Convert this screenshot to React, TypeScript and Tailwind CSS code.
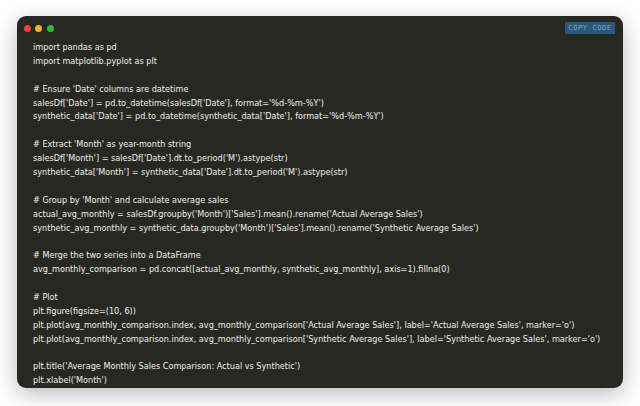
import React from "react";

const lines = [
  "import pandas as pd",
  "import matplotlib.pyplot as plt",
  "",
  "# Ensure 'Date' columns are datetime",
  "salesDf['Date'] = pd.to_datetime(salesDf['Date'], format='%d-%m-%Y')",
  "synthetic_data['Date'] = pd.to_datetime(synthetic_data['Date'], format='%d-%m-%Y')",
  "",
  "# Extract 'Month' as year-month string",
  "salesDf['Month'] = salesDf['Date'].dt.to_period('M').astype(str)",
  "synthetic_data['Month'] = synthetic_data['Date'].dt.to_period('M').astype(str)",
  "",
  "# Group by 'Month' and calculate average sales",
  "actual_avg_monthly = salesDf.groupby('Month')['Sales'].mean().rename('Actual Average Sales')",
  "synthetic_avg_monthly = synthetic_data.groupby('Month')['Sales'].mean().rename('Synthetic Average Sales')",
  "",
  "# Merge the two series into a DataFrame",
  "avg_monthly_comparison = pd.concat([actual_avg_monthly, synthetic_avg_monthly], axis=1).fillna(0)",
  "",
  "# Plot",
  "plt.figure(figsize=(10, 6))",
  "plt.plot(avg_monthly_comparison.index, avg_monthly_comparison['Actual Average Sales'], label='Actual Average Sales', marker='o')",
  "plt.plot(avg_monthly_comparison.index, avg_monthly_comparison['Synthetic Average Sales'], label='Synthetic Average Sales', marker='o')",
  "",
  "plt.title('Average Monthly Sales Comparison: Actual vs Synthetic')",
  "plt.xlabel('Month')",
];

export default function App() {
  return (
    <div className="w-[640px] h-[406px] bg-white overflow-hidden pt-[16px] pl-[17px]">
      <div className="relative w-[606px] h-[372px] rounded-[9px] bg-[#272822] overflow-hidden shadow-[0_6px_22px_rgba(0,0,0,0.28)]">
        <div className="h-[25px] flex items-center gap-[4.7px] pl-[6.5px]">
          <span className="w-[7px] h-[7px] rounded-full bg-[#fe3b3b]" />
          <span className="w-[7px] h-[7px] rounded-full bg-[#f8b120]" />
          <span className="w-[7px] h-[7px] rounded-full bg-[#28c328]" />
        </div>
        <button className="absolute top-[6px] right-[8px] w-[50px] h-[12px] bg-[#2a577d] text-[#7ea4c2] text-[7px] leading-[12px] tracking-[0.6px] flex items-center justify-center" style={{ fontFamily: '"DejaVu Sans Mono", monospace' }}>
          COPY CODE
        </button>
        <div className="pl-[16px] text-[#f0f0ec] text-[8.13px] leading-[13.9px] whitespace-pre" style={{ fontFamily: '"DejaVu Sans", Verdana, sans-serif' }}>
          {lines.map((l, i) => (
            <div key={i} className="h-[13.9px]">{l}</div>
          ))}
        </div>
      </div>
    </div>
  );
}
